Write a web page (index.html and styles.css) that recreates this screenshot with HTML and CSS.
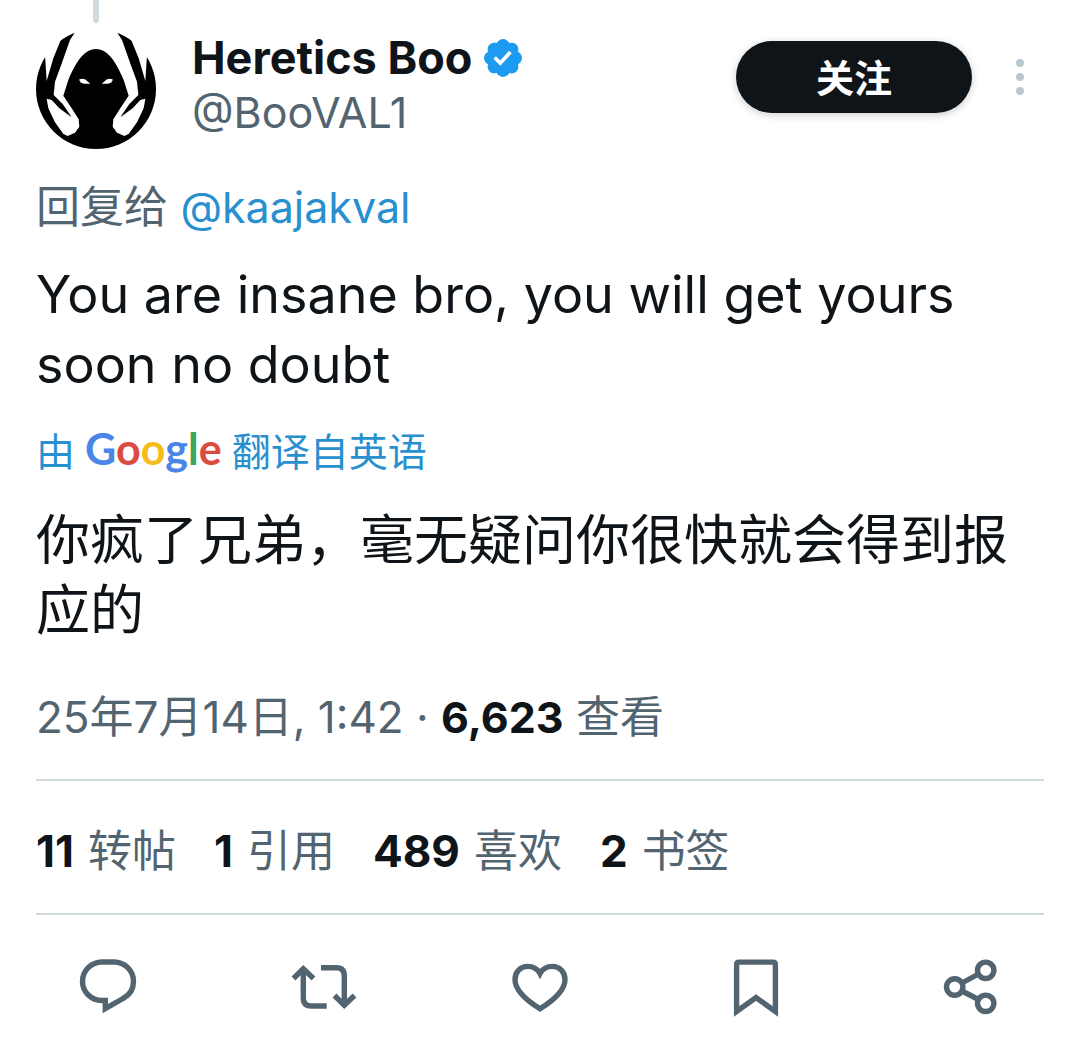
FILE: index.html
```html
<!DOCTYPE html>
<html lang="zh-CN">
<head>
<meta charset="utf-8">
<meta name="viewport" content="width=device-width, initial-scale=1">
<title>Heretics Boo</title>
<link rel="stylesheet" href="styles.css">
</head>
<body>
<article class="post">
  <div class="thread"></div>
  <header class="header">
    <svg class="avatar" viewBox="48 87 360 360" role="img" aria-label="Heretics Boo">
      <circle cx="228" cy="267" r="180"/>
      <g fill="#fff">
        <path d="M165 80V97L150 120L120 205L105 245L101 285L128 312L155 352L118 325L95 300L80 296L85 325L105 367L130 402L143 408L165 398L178 380L176 358L155 325L130 287L145 240C170 180 195 147 228 147C261 147 286 180 311 240L326 287L301 325L280 358L278 380L291 398L313 408L326 402L351 367L371 325L376 296L361 300L338 325L301 352L328 312L355 285L351 245L336 205L306 120L291 97V80z"/>
        <path d="M125 113L100 175L80 243L75 165L50 120L110 80zM331 113L356 175L376 243L381 165L406 120L346 80z"/>
        <path d="M177 239Q185 234 195 238L211 251Q195 253 183 248zM279 239Q271 234 261 238L245 251Q261 253 273 248z"/>
      </g>
    </svg>
    <div class="names">
      <div class="name">Heretics Boo
        <svg class="badge" viewBox="1.6 1.6 18.8 18.8" role="img" aria-label="认证账号"><path d="M20.396 11c-.018-.646-.215-1.275-.57-1.816-.354-.54-.852-.972-1.438-1.246.223-.607.27-1.264.14-1.897-.131-.634-.437-1.218-.882-1.687-.47-.445-1.053-.75-1.687-.882-.633-.13-1.29-.083-1.897.14-.273-.587-.704-1.086-1.245-1.44S11.647 1.62 11 1.604c-.646.017-1.273.213-1.813.568s-.969.854-1.24 1.44c-.608-.223-1.267-.272-1.902-.14-.635.13-1.22.436-1.69.882-.445.47-.749 1.055-.878 1.688-.13.633-.08 1.29.144 1.896-.587.274-1.087.705-1.443 1.245-.356.54-.555 1.17-.574 1.817.02.647.218 1.276.574 1.817.356.54.856.972 1.443 1.245-.224.606-.274 1.263-.144 1.896.13.634.433 1.218.877 1.688.47.443 1.054.747 1.687.878.633.132 1.29.084 1.897-.136.274.586.705 1.084 1.246 1.439.54.354 1.17.551 1.816.569.647-.016 1.276-.213 1.817-.567s.972-.854 1.245-1.44c.604.239 1.266.296 1.903.164.636-.132 1.22-.447 1.68-.907.46-.46.776-1.044.908-1.681s.075-1.299-.165-1.903c.586-.274 1.084-.705 1.439-1.246.354-.54.551-1.17.569-1.816zM9.662 14.85l-3.429-3.428 1.293-1.302 2.072 2.072 4.4-4.794 1.347 1.246z"/></svg>
      </div>
      <div class="handle">@BooVAL1</div>
    </div>
    <button class="follow" type="button">关注</button>
    <button class="more" type="button" aria-label="更多">
      <svg class="dots" viewBox="0 0 8 36"><circle cx="4" cy="4" r="4"/><circle cx="4" cy="18" r="4"/><circle cx="4" cy="32" r="4"/></svg>
    </button>
  </header>
  <p class="reply-to">回复给 <a class="link" href="#">@kaajakval</a></p>
  <p class="body">You are insane bro, you will get yours soon no doubt</p>
  <a class="source" href="#"><span>由</span><span class="google"><span class="blue">G</span><span class="red">o</span><span class="yellow">o</span><span class="blue">g</span><span class="green">l</span><span class="red">e</span></span><span>翻译自英语</span></a>
  <p class="body translated">你疯了兄弟，毫无疑问你很快就会得到报应的</p>
  <p class="meta">25年7月14日, 1:42 · <b class="num">6,623</b> 查看</p>
  <div class="stats">
    <span class="stat"><b class="num">11</b> 转帖</span>
    <span class="stat"><b class="num">1</b> 引用</span>
    <span class="stat"><b class="num">489</b> 喜欢</span>
    <span class="stat"><b class="num">2</b> 书签</span>
  </div>
  <div class="actions">
    <button class="action" type="button" aria-label="回复"><svg class="icon" viewBox="0 0 72 72"><path d="M30 11H42A19.5 19.5 0 0 1 61.5 30.5C61.5 38 57.5 44 51 47.5L33.3 57.7V49.5H30A19.3 19.3 0 0 1 10.5 30.5A19.5 19.5 0 0 1 30 11z"/></svg></button>
    <button class="action" type="button" aria-label="转帖"><svg class="icon" viewBox="0 0 72 72"><path d="M15.3 18V47q0 8 8 8H38.7M5.5 27.5L15.3 17.8L25.5 27.5M33 16.7H48.3q8 0 8 8V54M46.5 44.5L56.3 54.3L66.5 44.5"/></svg></button>
    <button class="action" type="button" aria-label="喜欢"><svg class="icon" viewBox="0 0 72 72"><path d="M36 57.8C21 48.5 11 38.5 11 28.5C11 21 16.5 15.4 23.5 15.4C29 15.4 33.5 17.8 36 22.5C38.5 17.8 43 15.4 48.5 15.4C55.5 15.4 61 21 61 28.5C61 38.5 51 48.5 36 57.8z"/></svg></button>
    <button class="action" type="button" aria-label="书签"><svg class="icon" viewBox="0 0 72 72"><path d="M16.6 60.5V13.5q0-2.4 2.4-2.4H53q2.4 0 2.4 2.4V60.5L36 46.5z"/></svg></button>
    <button class="action" type="button" aria-label="分享"><svg class="icon" viewBox="0 0 72 72"><circle cx="18.7" cy="36" r="8.2"/><circle cx="49.7" cy="19.3" r="8.2"/><circle cx="49.7" cy="52.3" r="8.2"/><path d="M26 32L42.5 23M26 40L42.5 48.5"/></svg></button>
  </div>
</article>
</body>
</html>
```
FILE: styles.css
```css
* { box-sizing: border-box; }
body {
  margin: 0;
  background: #fff;
  color: #0f1419;
  font-family: Inter, "Noto Sans CJK SC", sans-serif;
}
p { margin: 0; }
button { border: 0; padding: 0; background: none; font: inherit; cursor: pointer; }
a { color: #2990d0; text-decoration: none; }
svg { display: block; }

.post { padding: 0 36px; }
.thread {
  width: 6px;
  height: 23px;
  margin-left: 57px;
  border-radius: 0 0 3px 3px;
  background: #cfd9de;
}
.header { display: flex; align-items: flex-start; padding-top: 6px; }
.avatar { width: 120px; height: 120px; flex: none; }
.names { flex: 1; padding: 2px 0 0 36px; }
.name {
  display: flex;
  align-items: center;
  gap: 12px;
  font-size: 45px;
  font-weight: 700;
  line-height: 54px;
}
.badge { width: 38px; height: 38px; fill: #1d9bf0; }
.handle { color: #536471; font-size: 43px; line-height: 54px; }
.follow {
  width: 236px;
  height: 72px;
  margin-top: 12px;
  padding-bottom: 4px;
  border-radius: 36px;
  background: #0f1419;
  color: #fff;
  font-size: 38px;
  font-weight: 700;
  box-shadow: 0 2px 8px rgb(0 0 0 / 20%);
}
.more { display: flex; justify-content: center; width: 48px; margin: 30px 0 0 24px; }
.dots { width: 8px; height: 36px; fill: #b9c8d0; }

.reply-to { margin-top: 30px; color: #536471; font-size: 44px; line-height: 56px; }
.link { font-size: 43px; }
.body { margin-top: 25px; font-size: 52px; line-height: 70px; }
.source {
  display: flex;
  align-items: center;
  gap: 10px;
  margin-top: 22px;
  font-size: 39px;
  line-height: 60px;
}
.google { padding-bottom: 6px; font-family: Lato, sans-serif; font-size: 43px; font-weight: 700; line-height: 54px; }
.blue { color: #4a86e8; }
.red { color: #dc4a40; }
.yellow { color: #f4bd1c; }
.green { color: #3fa65a; }
.translated { margin-top: 24px; font-size: 54px; }

.meta {
  margin-top: 43px;
  padding-bottom: 34px;
  border-bottom: 2px solid #cfd9de;
  color: #536471;
  font-size: 44px;
  line-height: 56px;
}
.num { color: #0f1419; font-weight: 700; }
.meta .num { font-size: 43px; }
.stats {
  display: flex;
  gap: 38px;
  padding: 42px 0 34px;
  border-bottom: 2px solid #cfd9de;
  color: #536471;
  font-size: 44px;
  line-height: 56px;
}
.stat { display: flex; gap: 14px; }
.actions { display: grid; grid-template-columns: repeat(5, 1fr); margin: 36px -36px 20px; }
.action { display: flex; justify-content: center; }
.icon { width: 72px; height: 72px; fill: none; stroke: #536471; stroke-width: 5.4; }
```
